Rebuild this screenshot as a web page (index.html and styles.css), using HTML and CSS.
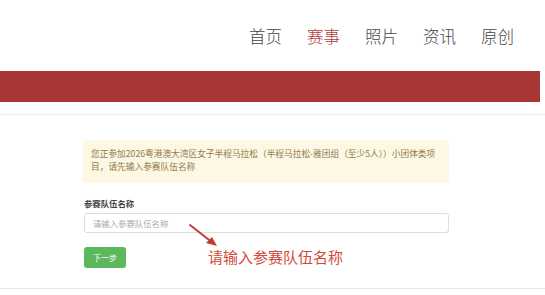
FILE: index.html
```html
<!DOCTYPE html>
<html lang="zh-CN">
<head>
<meta charset="UTF-8">
<meta name="viewport" content="width=device-width, initial-scale=1.0">
<title>参赛队伍</title>
<link rel="stylesheet" href="styles.css">
</head>
<body>

<div class="header">
    <ul class="nav">
        <li>首页</li>
        <li class="active">赛事</li>
        <li>照片</li>
        <li>资讯</li>
        <li>原创</li>
    </ul>
</div>
<div class="banner"></div>

<div class="main">
    <div class="alert">您正参加2026粤港澳大湾区女子半程马拉松（半程马拉松-雅团组（至少5人））小团体类项目，请先输入参赛队伍名称</div>
    <form class="team-form">
        <label for="team">参赛队伍名称</label>
        <input type="text" id="team" name="team" placeholder="请输入参赛队伍名称">
        <button type="button">下一步</button>
    </form>

    <svg class="arrow" width="34" height="28" viewBox="0 0 34 28">
        <line x1="3" y1="3" x2="26" y2="21" stroke="#c73a2e" stroke-width="2" stroke-linecap="round"/>
        <polygon points="30,24 19,21 25,15" fill="#c73a2e"/>
    </svg>
    <div class="hint">请输入参赛队伍名称</div>
</div>

</body>
</html>
```

FILE: styles.css
```css
body {
    margin: 0;
    padding: 0;
    background-color: #fff;
    font-family: "Noto Sans CJK SC", "Noto Sans", sans-serif;
    color: #333;
}
.header {
    height: 71px;
    display: flex;
    justify-content: flex-end;
    align-items: center;
    padding-right: 31px;
}
.nav {
    list-style: none;
    margin: 0;
    padding: 0;
    display: flex;
    gap: 25px;
}
.nav li {
    font-size: 16.5px;
    line-height: 20px;
    font-weight: 300;
    color: #444;
}
.nav li.active {
    color: #b23a3a;
}
.banner {
    height: 31px;
    margin-right: 5px;
    background-color: #a83636;
}
.main {
    position: relative;
    margin-top: 12px;
    border-top: 1px solid #eee;
    border-bottom: 1px solid #e6e6e6;
    padding: 25px 96px 20px 83px;
}
.alert {
    background-color: #fcf8e3;
    color: #947a4e;
    font-size: 8.7px;
    line-height: 13px;
    padding: 7px 8px 10px 8px;
    border-radius: 2px;
}
.team-form {
    margin: 15px 0 0 1px;
}
label {
    display: block;
    font-size: 8.4px;
    line-height: 11px;
    font-weight: bold;
    color: #444;
    margin-bottom: 4px;
}
input[type="text"] {
    display: block;
    width: 100%;
    height: 20px;
    padding: 0 8px;
    margin: 0 0 9px 0;
    border: 1px solid #ddd;
    border-radius: 3px;
    box-sizing: border-box;
    font-family: inherit;
    font-size: 8.4px;
}
input::placeholder {
    color: #aaa;
}
button {
    width: 42px;
    height: 21px;
    padding: 0;
    border: none;
    border-radius: 3px;
    background-color: #5cb85c;
    color: #fff;
    font-family: inherit;
    font-size: 8px;
}
.arrow {
    position: absolute;
    left: 187px;
    top: 107px;
}
.hint {
    position: absolute;
    left: 208px;
    top: 132px;
    font-size: 15px;
    line-height: 20px;
    color: #d24a3a;
}
```
